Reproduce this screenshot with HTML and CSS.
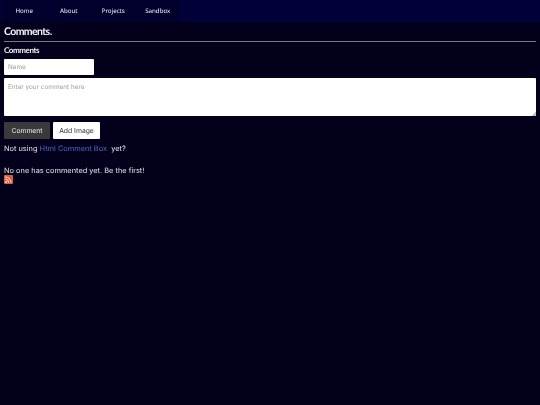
FILE: index.html
```html
<!DOCTYPE html>
<html lang="en">
<head>
<meta charset="utf-8">
<title>Comments.</title>
<link rel="stylesheet" href="styles.css">
</head>
<body>
<div class="page">
<nav class="nav">
  <a class="nav-item" href="#">Home</a>
  <a class="nav-item" href="#">About</a>
  <a class="nav-item" href="#">Projects</a>
  <a class="nav-item" href="#">Sandbox</a>
</nav>
<main class="main">
  <h1 class="title">Comments.</h1>
  <hr class="rule">
  <h2 class="subtitle">Comments</h2>
  <input class="name" type="text" placeholder="Name">
  <textarea class="comment" placeholder="Enter your comment here"></textarea>
  <div class="actions">
    <button class="btn btn-dark" type="button">Comment</button>
    <button class="btn btn-light" type="button">Add Image</button>
  </div>
  <p class="promo">Not using <a class="link" href="#">Html Comment Box</a> &nbsp;yet?</p>
  <p class="empty">No one has commented yet. Be the first!</p>
  <svg class="rss" viewBox="0 0 9 9" width="9" height="9" aria-hidden="true">
    <rect width="9" height="9" rx="1" fill="#e0583f"/>
    <circle cx="2.2" cy="6.9" r="1" fill="#fbe3dc"/>
    <path d="M1.3 4.2a3.5 3.5 0 0 1 3.5 3.5M1.3 2a5.7 5.7 0 0 1 5.7 5.7" fill="none" stroke="#fbe3dc" stroke-width="1"/>
  </svg>
</main>
</div>
</body>
</html>
```
FILE: styles.css
```css
* { box-sizing: border-box; }
html, body { margin: 0; height: 100%; }
body {
  background: #02001a;
  color: #e4e4ea;
  font-family: "Inter", "DejaVu Sans", sans-serif;
  font-size: 7.4px;
  text-rendering: geometricPrecision;
}
.page { will-change: transform; }
.nav {
  display: flex;
  height: 22px;
  background: #010039;
  padding-left: 2px;
}
.nav-item {
  width: 44.5px;
  text-align: center;
  line-height: 21px;
  color: #f0f0f5;
  text-decoration: none;
  font-family: "Noto Sans", sans-serif;
  font-size: 6.2px;
  background: #01002c;
}
.main {
  display: flex;
  flex-direction: column;
  align-items: flex-start;
  padding: 0 4px;
}
.title {
  margin: 3px 0 0;
  font-family: "Lato", sans-serif;
  font-size: 10.5px;
  font-weight: 700;
  letter-spacing: -0.6px;
  line-height: 15px;
  color: #f2f2f7;
}
.rule {
  align-self: stretch;
  margin: 1px 0 0;
  border: 0;
  height: 1px;
  background: #77778a;
}
.subtitle {
  margin: 3px 0 0;
  font-family: "Lato", sans-serif;
  font-size: 8px;
  font-weight: 700;
  letter-spacing: -0.4px;
  line-height: 11px;
  color: #f2f2f7;
}
.name {
  width: 90px;
  height: 16px;
  margin-top: 3px;
  padding: 0 4px;
  border: 0;
  border-radius: 1px;
  background: #fff;
  font: 6.4px "Inter", sans-serif;
  text-rendering: geometricPrecision;
}
.comment {
  width: 532px;
  height: 38px;
  margin-top: 3px;
  padding: 5px 4px 4px;
  border: 0;
  border-radius: 1px;
  background: #fff;
  font: 6.4px "Inter", sans-serif;
  text-rendering: geometricPrecision;
  resize: both;
}
.comment::-webkit-resizer {
  background: linear-gradient(135deg, transparent 50%, #c4c4cc 50%) no-repeat right bottom / 4px 4px;
}
.name::placeholder, .comment::placeholder { color: #a0a0a6; }
.actions {
  display: flex;
  gap: 3px;
  margin-top: 6px;
}
.btn {
  height: 17px;
  padding: 0;
  border: 0;
  border-radius: 1px;
  font: 6.8px "Inter", sans-serif;
  text-rendering: geometricPrecision;
}
.btn-dark { width: 46px; background: #3a3a3a; color: #ececec; }
.btn-light { width: 47px; background: #fff; color: #333; }
.promo {
  margin: 5px 0 0;
  line-height: 10px;
}
.link { color: #5068c8; text-decoration: none; }
.empty {
  margin: 12px 0 0;
  line-height: 10px;
}
.rss { display: block; margin-top: -1px; }
```
